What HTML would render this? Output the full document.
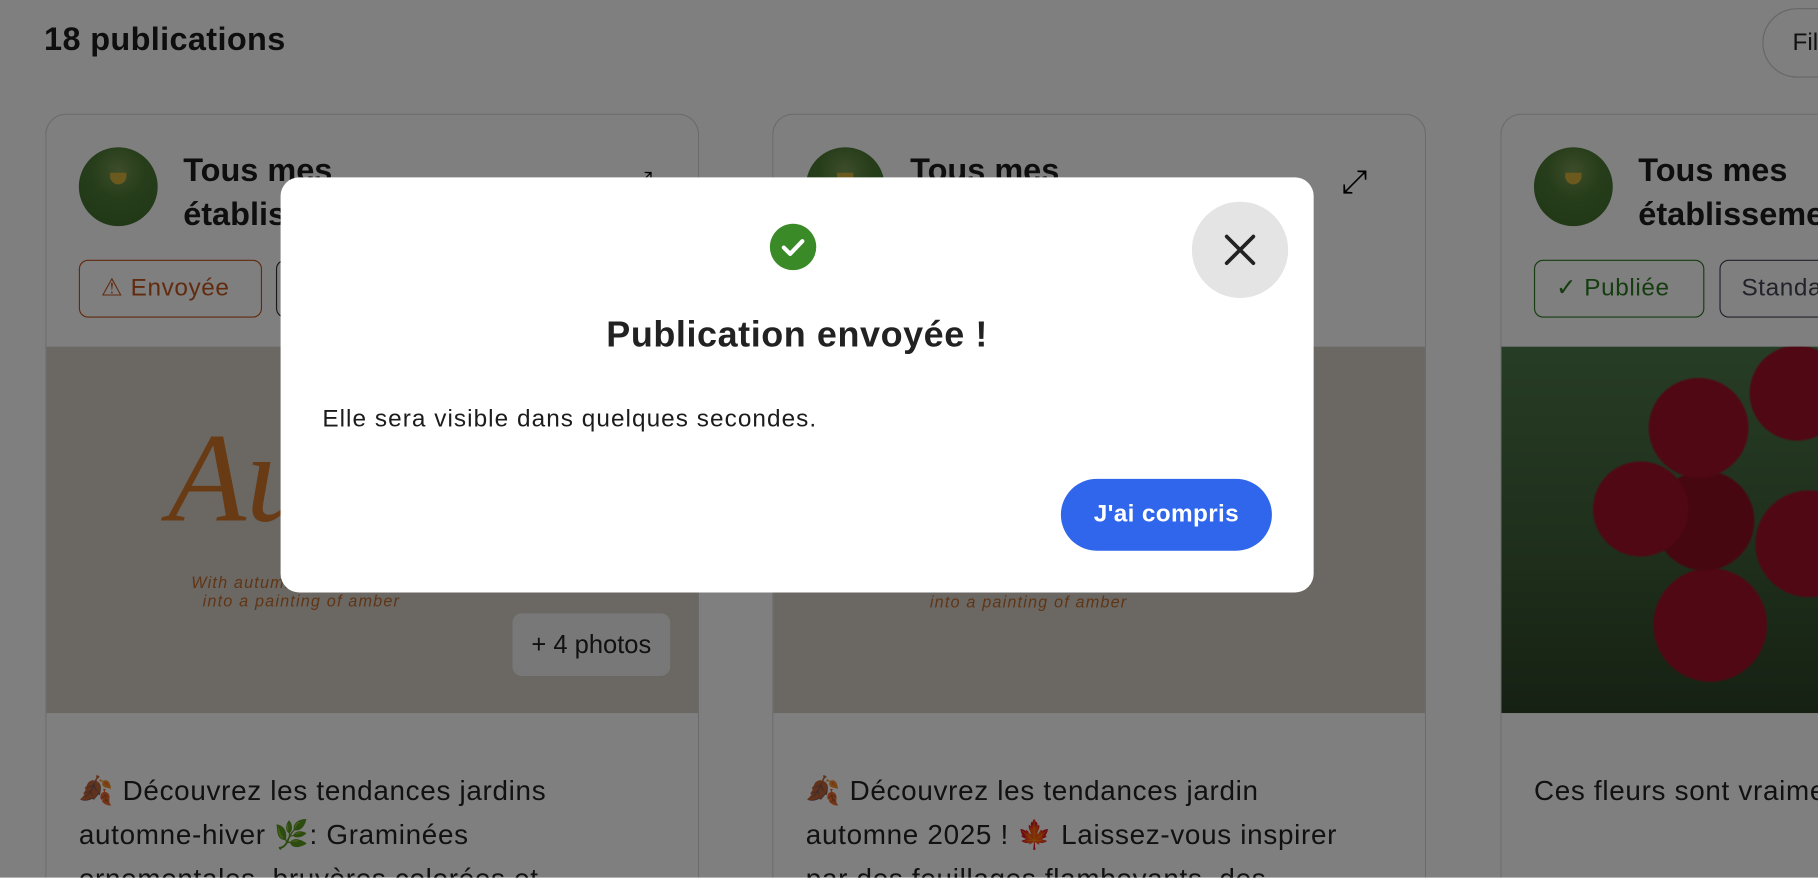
<!DOCTYPE html>
<html><head><meta charset="utf-8"><style>
html,body{margin:0;padding:0;width:1818px;height:878px;overflow:hidden;background:#fff;font-family:"Liberation Sans","DejaVu Sans",sans-serif;}
#w{position:absolute;left:0;top:0;width:1568px;height:757px;overflow:hidden;transform:scale(1.15944);transform-origin:0 0;background:#fff;}
.abs{position:absolute;}
.card{position:absolute;top:98px;width:564px;height:662px;border:1.5px solid #d6d6d6;border-bottom:none;border-radius:18px 18px 0 0;background:#fff;overflow:hidden;box-sizing:border-box;}
.av{position:absolute;left:28px;top:28px;width:68px;height:68px;border-radius:50%;background:radial-gradient(circle at 50% 30%,#7a9a55 0,#4d7a35 40%,#3f6e2c 100%);}
.av:after{content:"";position:absolute;left:27px;top:22px;width:14px;height:10px;border-radius:0 0 8px 8px;background:#d8b33a;}
.tt{position:absolute;left:118px;top:29px;font-size:28px;font-weight:bold;line-height:38px;color:#1c1c1c;white-space:nowrap;}
.badge{position:absolute;top:125px;height:50px;border-radius:8px;border:1.5px solid;font-size:21px;line-height:48px;padding:0 18px;box-sizing:border-box;white-space:nowrap;letter-spacing:0.5px;}
.img{position:absolute;left:0;top:200px;width:100%;height:316px;}
.txt{position:absolute;left:28px;top:565px;font-size:24px;line-height:38px;color:#222;white-space:nowrap;letter-spacing:0.6px;}
#ov{position:absolute;left:0;top:0;width:1568px;height:757px;background:rgba(0,0,0,0.5);}
</style></head><body><div id="w">
<div class="abs" style="left:38px;top:18px;font-size:28px;font-weight:bold;color:#1c1c1c;letter-spacing:0.3px;">18 publications</div>
<div class="abs" style="left:1520px;top:7px;width:120px;height:60px;border:1.5px solid #ccc;border-radius:30px;font-size:21px;line-height:58px;padding-left:25px;box-sizing:border-box;color:#222;">Filtres</div>

<div class="card" style="left:39px;">
 <div class="av"></div><div class="tt">Tous mes<br>établissements</div>
 <div class="abs" style="left:505px;top:44px;font-size:22px;">⤢</div>
 <div class="badge" style="left:28px;width:158px;border-color:#c2561f;color:#c2561f;">⚠ Envoyée</div>
 <div class="badge" style="left:198px;width:140px;border-color:#333;color:#333;">Standard</div>
 <div class="img" style="background:#d6d1c8;"><div class="abs" style="left:105px;top:50px;font-size:110px;font-style:italic;color:#d2772b;font-family:'Liberation Serif',serif;">Au</div>
 <div class="abs" style="left:125px;top:195px;font-size:14px;font-style:italic;color:#c06a2b;letter-spacing:1px;">With autumn<br>&nbsp;&nbsp;into a painting of amber</div>
 <div class="abs" style="left:402px;top:230px;width:136px;height:54px;border-radius:8px;background:#f0f0f0;font-size:22px;line-height:54px;text-align:center;color:#222;">+ 4 photos</div></div>
 <div class="txt">🍂 Découvrez les tendances jardins<br>automne-hiver 🌿: Graminées<br>ornementales, bruyères colorées et</div>
</div>
<div class="card" style="left:666px;">
 <div class="av"></div><div class="tt">Tous mes<br>établissements</div>
 <div class="abs" style="left:490px;top:42px;font-size:28px;">⤢</div>
 <div class="img" style="background:#d6d1c8;"><div class="abs" style="left:135px;top:212px;font-size:14px;font-style:italic;color:#c06a2b;letter-spacing:1px;">into a painting of amber</div></div>
 <div class="txt">🍂 Découvrez les tendances jardin<br>automne 2025 ! 🍁 Laissez-vous inspirer<br>par des feuillages flamboyants, des</div>
</div>
<div class="card" style="left:1294px;">
 <div class="av"></div><div class="tt">Tous mes<br>établissements</div>
 <div class="badge" style="left:28px;width:147px;border-color:#2a7a1f;color:#2a7a1f;">✓ Publiée</div>
 <div class="badge" style="left:188px;width:140px;border-color:#445;color:#445;">Standard</div>
 <div class="img" style="background:radial-gradient(circle at 170px 70px,#a01228 0 42px,transparent 44px),radial-gradient(circle at 120px 140px,#a01228 0 40px,transparent 42px),radial-gradient(circle at 175px 150px,#8e0e22 0 42px,transparent 44px),radial-gradient(circle at 255px 40px,#a01228 0 40px,transparent 42px),radial-gradient(circle at 265px 170px,#a01228 0 45px,transparent 47px),radial-gradient(circle at 180px 240px,#a01228 0 48px,transparent 50px),linear-gradient(#4f7a4a,#3c5c35 60%,#2c4226);"></div>
 <div class="txt">Ces fleurs sont vraiment magnifiques</div>
</div>

<div id="ov"></div>

<div class="abs" style="left:242px;top:153px;width:891px;height:358px;background:#fff;border-radius:16px;">
 <div class="abs" style="left:422px;top:40px;width:40px;height:40px;border-radius:50%;background:#3a8a27;">
  <svg width="40" height="40" viewBox="0 0 40 40"><path d="M12 20.5l5.5 5.5L28 15" fill="none" stroke="#fff" stroke-width="3.6" stroke-linecap="round" stroke-linejoin="round"/></svg></div>
 <div class="abs" style="left:0;width:891px;top:118px;text-align:center;font-size:31px;font-weight:bold;color:#222;letter-spacing:0.5px;">Publication envoyée !</div>
 <div class="abs" style="left:36px;top:197px;font-size:21px;color:#1c1c1c;letter-spacing:0.9px;">Elle sera visible dans quelques secondes.</div>
 <div class="abs" style="left:673px;top:260px;width:182px;height:62px;border-radius:31px;background:#2f66eb;color:#fff;font-size:21px;line-height:62px;text-align:center;font-weight:bold;letter-spacing:0.3px;">J'ai compris</div>
 <div class="abs" style="left:786px;top:21px;width:83px;height:83px;border-radius:50%;background:#e4e4e4;">
  <svg width="83" height="83" viewBox="0 0 83 83"><path d="M30 30L53 53M53 30L30 53" stroke="#222" stroke-width="3.2" stroke-linecap="round"/></svg></div>
</div>
</div></body></html>
